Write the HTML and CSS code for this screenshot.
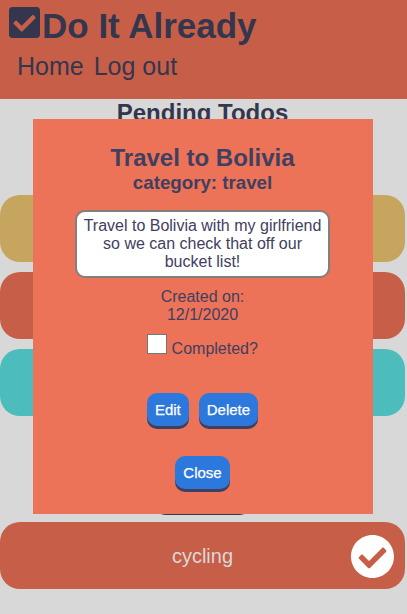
FILE: index.html
```html
<!DOCTYPE html>
<html lang="en">
<head>
<meta charset="utf-8">
<title>Do It Already</title>
<link rel="stylesheet" href="styles.css">
</head>
<body>
<header class="header">
  <h1 class="brand">
    <svg class="brand-icon" viewBox="0 32 448 448"><path fill="currentColor" d="M400 480H48c-26.510 0-48-21.490-48-48V80c0-26.510 21.490-48 48-48h352c26.510 0 48 21.490 48 48v352c0 26.510-21.490 48-48 48zm-204.686-98.059l184-184c6.248-6.248 6.248-16.379 0-22.627l-22.627-22.627c-6.248-6.248-16.379-6.249-22.628 0L184 302.745l-70.059-70.059c-6.248-6.248-16.379-6.248-22.628 0l-22.627 22.627c-6.248 6.248-6.248 16.379 0 22.627l104 104c6.249 6.249 16.379 6.249 22.628.001z"/></svg>
    <span>Do It Already</span>
  </h1>
  <nav class="nav"><a>Home</a><a>Log out</a></nav>
</header>
<main class="page">
  <h2 class="heading">Pending Todos</h2>
  <ul class="todos">
    <li class="todo gold"></li>
    <li class="todo coral"></li>
    <li class="todo teal"></li>
  </ul>
  <div class="add"></div>
  <div class="todo coral done">
    <span class="name">cycling</span>
    <svg class="check" viewBox="8 8 496 496"><path fill="#fff" d="M504 256c0 136.967-111.033 248-248 248S8 392.967 8 256 119.033 8 256 8s248 111.033 248 248zM227.314 387.314l184-184c6.248-6.248 6.248-16.379 0-22.627l-22.627-22.627c-6.248-6.249-16.379-6.249-22.628 0L216 308.118l-70.059-70.059c-6.248-6.248-16.379-6.248-22.628 0l-22.627 22.627c-6.248 6.248-6.248 16.379 0 22.627l104 104c6.249 6.249 16.379 6.249 22.628.001z"/></svg>
  </div>
</main>
<section class="modal">
  <h2 class="modal-title">Travel to Bolivia</h2>
  <h3 class="category">category: travel</h3>
  <p class="description">Travel to Bolivia with my girlfriend so we can check that off our bucket list!</p>
  <p class="created">Created on:<br>12/1/2020</p>
  <label class="completed"><span class="box"></span><span>Completed?</span></label>
  <div class="actions"><button>Edit</button><button>Delete</button></div>
  <div class="close"><button>Close</button></div>
</section>
</body>
</html>
```
FILE: styles.css
```css
* { box-sizing: border-box; margin: 0; padding: 0; }
body {
  height: 614px;
  overflow: hidden;
  background: #d8d8d8;
  color: #34364e;
  font: 16px/18px "Liberation Sans", Arial, sans-serif;
}
.header { height: 99px; padding: 7px 9px 0; background: #c75f48; }
.brand { display: flex; height: 39px; font-size: 35px; line-height: 37px; }
.brand-icon { width: 31px; height: 31px; margin-right: 2px; }
.nav { display: flex; gap: 10px; padding: 6px 8px 0; font-size: 25px; line-height: 29px; }
.page { width: 405px; }
.heading { height: 96px; font-size: 24px; line-height: 28px; text-align: center; }
.todos { display: flex; flex-direction: column; gap: 10px; list-style: none; }
.todo { height: 67px; border-radius: 20px; }
.gold { background: #c6a65f; }
.coral { background: #c75f48; }
.teal { background: #4cbdbc; }
.add { width: 97px; height: 35px; margin: 64px auto 7px; border-radius: 12px; background: #34364e; }
.done {
  display: grid;
  grid-template-columns: 43px 1fr 43px;
  align-items: center;
  padding: 0 11px;
}
.name { grid-column: 2; color: #d8d8d8; font-size: 20px; line-height: 24px; text-align: center; }
.check { width: 43px; height: 43px; margin-top: 2px; }
.modal {
  position: absolute;
  top: 119px;
  left: 33px;
  display: flex;
  flex-direction: column;
  align-items: center;
  width: 340px;
  height: 394.5px;
  padding: 25px 1px 0 0;
  background: #ec7258;
  color: #3f4060;
  text-align: center;
}
.modal-title { font-size: 24px; line-height: 28px; }
.category { font-size: 18.72px; line-height: 22px; }
.description {
  width: 255px;
  height: 68px;
  margin-top: 16px;
  padding: 5px 4px;
  border: 2px solid #808080;
  border-radius: 10px;
  background: #fff;
}
.created { margin-top: 10px; }
.completed { display: flex; gap: 4.5px; margin-top: 10px; }
.completed span:last-child { margin-top: 6px; }
.box { width: 20px; height: 20px; border: 1px solid #767676; background: #fff; }
.actions { display: flex; gap: 10px; margin-top: 35px; }
.close { margin-top: 30px; }
button {
  display: block;
  height: 33px;
  padding: 0 8px;
  border: 0;
  border-radius: 10px;
  background: #2d78dc;
  box-shadow: 0 3px #3f4060;
  color: #fff;
  font: 15px/33px "Liberation Sans", Arial, sans-serif;
  -webkit-text-stroke: 0.25px #fff;
}
```
